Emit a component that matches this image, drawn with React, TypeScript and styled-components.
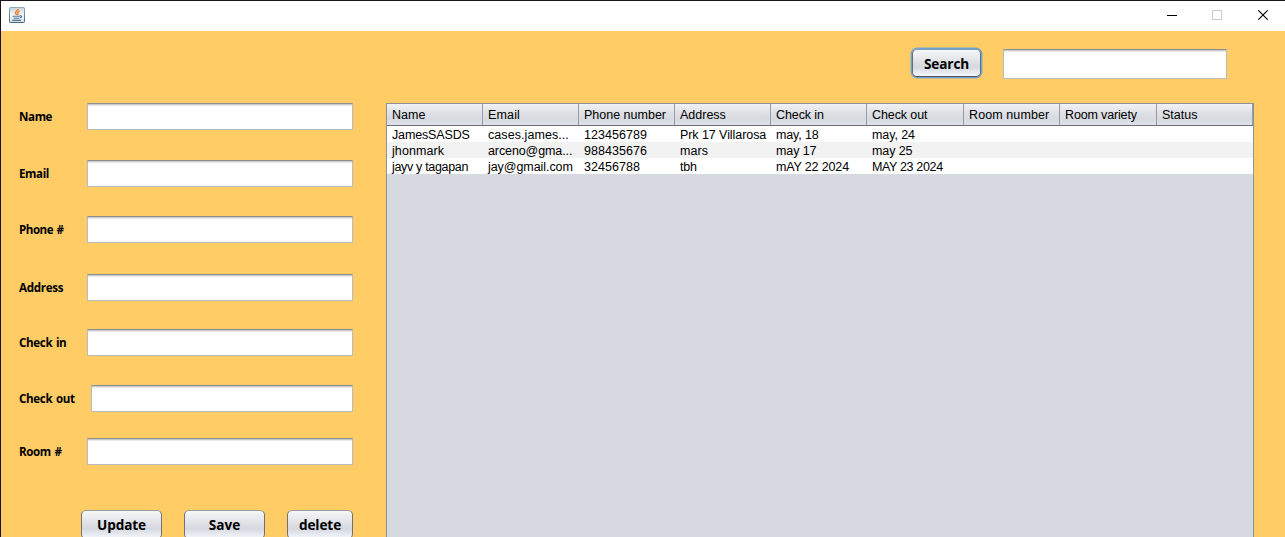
import React from 'react';
import styled, { createGlobalStyle } from 'styled-components';

const GlobalStyle = createGlobalStyle`
  * { box-sizing: border-box; }
  body { margin: 0; overflow: hidden; }
`;

const Window = styled.div`
  width: 1285px;
  height: 537px;
  display: flex;
  flex-direction: column;
  overflow: hidden;
  border-top: 1px solid #18141a;
  border-left: 1px solid #18141a;
  background: #ffcc66;
  color: #000;
`;

const TitleBar = styled.header`
  flex: none;
  height: 30px;
  display: flex;
  justify-content: space-between;
  align-items: flex-start;
  padding: 6px 0 0 8px;
  background: #fff;
`;

const WindowControls = styled.div`
  display: grid;
  grid-template-columns: 45px 46px 10px;
  width: 101px;
  height: 16px;
  margin-right: 17px;
  align-items: center;
  svg { display: block; }
`;

const SearchBar = styled.div`
  flex: none;
  height: 72px;
  display: flex;
  justify-content: flex-end;
  align-items: flex-start;
  gap: 21px;
  padding: 18px 58px 0 0;
`;

const Content = styled.main`
  display: flex;
  align-items: flex-start;
`;

const Form = styled.form`
  width: 352px;
  display: flex;
  flex-direction: column;
`;

const FieldRow = styled.label<{ $gap: number }>`
  height: 27px;
  display: flex;
  align-items: center;
  padding-left: 18px;
  margin-bottom: ${(p) => p.$gap}px;
`;

const FieldLabel = styled.span<{ $width: number; $spacing: number }>`
  flex: none;
  width: ${(p) => p.$width}px;
  font: 700 11.6px/16px 'Open Sans', 'Noto Sans', sans-serif;
  letter-spacing: ${(p) => p.$spacing}px;
  word-spacing: 1px;
  white-space: nowrap;
`;

const TextInput = styled.input<{ $width?: number; $height?: number }>`
  flex: ${(p) => (p.$width ? 'none' : '1')};
  width: ${(p) => (p.$width ? `${p.$width}px` : '0')};
  height: ${(p) => p.$height ?? 27}px;
  min-width: 0;
  margin: 0;
  padding: 0 6px;
  border: 1px solid #b9bbbf;
  border-top-color: #8d8e91;
  border-radius: 0;
  outline: none;
  background: linear-gradient(#cbcbcc 0 1px, #e9e9ea 1px 2px, #fff 2px);
`;

const Actions = styled.div`
  display: flex;
  gap: 22px;
  padding-left: 80px;
`;

const Button = styled.button<{ $width: number; $spacing: number; $focused?: boolean }>`
  flex: none;
  width: ${(p) => p.$width}px;
  height: ${(p) => (p.$focused ? 28 : 29)}px;
  margin: 0 ${(p) => (p.$focused ? '1px' : '0')};
  padding: ${(p) => (p.$focused ? '2px 0 0' : '0')};
  border: 1px solid;
  border-color: ${(p) => (p.$focused ? '#7f9cb8 #5f6f80 #4e5258' : '#9a9b9d #6f7277 #55585d')};
  border-radius: 5px;
  background: linear-gradient(#f6f7f8, #e4e6ea 35%, #d5d8de 65%, #e3e6ed 82%, #f4f6fb);
  box-shadow: ${(p) => (p.$focused ? '0 0 0 1.4px #73a4d1' : 'none')};
  color: #000;
  font: 700 13.6px/20px 'Open Sans', 'Noto Sans', sans-serif;
  letter-spacing: ${(p) => p.$spacing}px;
  white-space: nowrap;
`;

const TablePane = styled.div`
  width: 868px;
  height: 440px;
  margin-left: 33px;
  border: 1px solid #8d929b;
  background: #d6d9df;
`;

const columnTracks = '96px 96px 96px 96px 96px 97px 96px 97px 96px';

const HeaderRow = styled.div`
  display: grid;
  grid-template-columns: ${columnTracks};
  height: 22px;
  border-bottom: 1px solid #6c7078;
  background: linear-gradient(#f1f2f4, #e0e2e7 40%, #d6d9df 70%, #dfe2e8);
`;

const HeaderCell = styled.div<{ $spacing: number }>`
  height: 21px;
  padding-left: 5px;
  border-right: 1px solid #989ba1;
  font: 12.5px/23px 'Liberation Sans', Arial, sans-serif;
  letter-spacing: ${(p) => p.$spacing}px;
  white-space: nowrap;
`;

const BodyRow = styled.div`
  display: grid;
  grid-template-columns: ${columnTracks};
  height: 16px;
  background: #fff;
  &:nth-child(odd) { background: #f2f2f2; }
`;

const BodyCell = styled.div<{ $spacing: number }>`
  padding-left: 5px;
  font: 12.5px/18px 'Liberation Sans', Arial, sans-serif;
  letter-spacing: ${(p) => p.$spacing}px;
  white-space: nowrap;
`;

type Text = [string, number];

const fields = [
  { label: 'Name', labelWidth: 68, gap: 30, spacing: -0.4 },
  { label: 'Email', labelWidth: 68, gap: 29, spacing: -0.4 },
  { label: 'Phone #', labelWidth: 68, gap: 31, spacing: -0.5 },
  { label: 'Address', labelWidth: 68, gap: 28, spacing: -0.3 },
  { label: 'Check in', labelWidth: 68, gap: 29, spacing: -0.35 },
  { label: 'Check out', labelWidth: 72, gap: 26, spacing: -0.35 },
  { label: 'Room #', labelWidth: 68, gap: 45, spacing: -0.4 },
];

const headers: Text[] = [
  ['Name', 0], ['Email', 0.15], ['Phone number', 0], ['Address', 0], ['Check in', -0.1],
  ['Check out', -0.1], ['Room number', 0.1], ['Room variety', -0.15], ['Status', 0],
];

const rows: Text[][] = [
  [['JamesSASDS', -0.15], ['cases.james...', 0.07], ['123456789', 0.05], ['Prk 17 Villarosa', -0.07], ['may, 18', -0.15], ['may, 24', -0.1]],
  [['jhonmark', 0.08], ['arceno@gma...', -0.1], ['988435676', 0.05], ['mars', 0.05], ['may 17', -0.1], ['may 25', -0.1]],
  [['jayv y tagapan', -0.32], ['jay@gmail.com', -0.06], ['32456788', 0.05], ['tbh', -0.15], ['mAY 22 2024', -0.15], ['MAY 23 2024', -0.35]],
];

const JavaIcon = () => (
  <svg width="16" height="16" viewBox="0 0 16 16" fill="none">
    <defs>
      <linearGradient id="tile" x1="0" y1="0" x2="0" y2="1">
        <stop offset="0" stopColor="#8fa9b8" />
        <stop offset="1" stopColor="#40687f" />
      </linearGradient>
      <linearGradient id="face" x1="0" y1="0" x2="0" y2="1">
        <stop offset="0" stopColor="#c9d3da" />
        <stop offset="0.5" stopColor="#f4f7f9" />
        <stop offset="1" stopColor="#d3dfe7" />
      </linearGradient>
    </defs>
    <rect x="0.5" y="0.5" width="15" height="15" rx="0.8" fill="url(#face)" stroke="url(#tile)" />
    <path d="M8.9 1.9C9.3 3.9 5.8 4.2 6.5 6.1C6.8 6.9 7.4 7.1 7.6 7.9M10.5 4.2C8.7 4.9 8.3 5.6 8.9 6.5C9.2 7 8.9 7.5 8.4 8" stroke="#ee7a22" strokeWidth="1.4" />
    <path d="M3.6 9.2H10.8M4.8 11.2H10.2M10.6 8.9C13.6 8.3 13 10.6 10.8 11M3.2 13.4H12" stroke="#4b7796" strokeWidth="1.1" />
  </svg>
);

export default function App() {
  return (
    <>
      <GlobalStyle />
      <Window>
        <TitleBar>
          <JavaIcon />
          <WindowControls>
            <svg width="10" height="10" shapeRendering="crispEdges"><path d="M0 5.5H10" stroke="#000" /></svg>
            <svg width="10" height="10" shapeRendering="crispEdges"><rect x="0.5" y="0.5" width="9" height="9" fill="none" stroke="#ccc" /></svg>
            <svg width="10" height="10"><path d="M0.3 0.3L9.7 9.7M9.7 0.3L0.3 9.7" stroke="#000" strokeWidth="1.1" /></svg>
          </WindowControls>
        </TitleBar>
        <SearchBar>
          <Button type="button" $width={69} $spacing={-0.1} $focused>Search</Button>
          <TextInput aria-label="Search" $width={224} $height={30} />
        </SearchBar>
        <Content>
          <Form>
            {fields.map((f) => (
              <FieldRow key={f.label} $gap={f.gap}>
                <FieldLabel $width={f.labelWidth} $spacing={f.spacing}>{f.label}</FieldLabel>
                <TextInput />
              </FieldRow>
            ))}
            <Actions>
              <Button type="button" $width={81} $spacing={-0.1}>Update</Button>
              <Button type="button" $width={81} $spacing={0}>Save</Button>
              <Button type="button" $width={66} $spacing={-0.1}>delete</Button>
            </Actions>
          </Form>
          <TablePane>
            <HeaderRow>
              {headers.map(([text, spacing]) => (
                <HeaderCell key={text} $spacing={spacing}>{text}</HeaderCell>
              ))}
            </HeaderRow>
            {rows.map((row) => (
              <BodyRow key={row[0][0]}>
                {row.map(([text, spacing]) => (
                  <BodyCell key={text} $spacing={spacing}>{text}</BodyCell>
                ))}
              </BodyRow>
            ))}
          </TablePane>
        </Content>
      </Window>
    </>
  );
}
